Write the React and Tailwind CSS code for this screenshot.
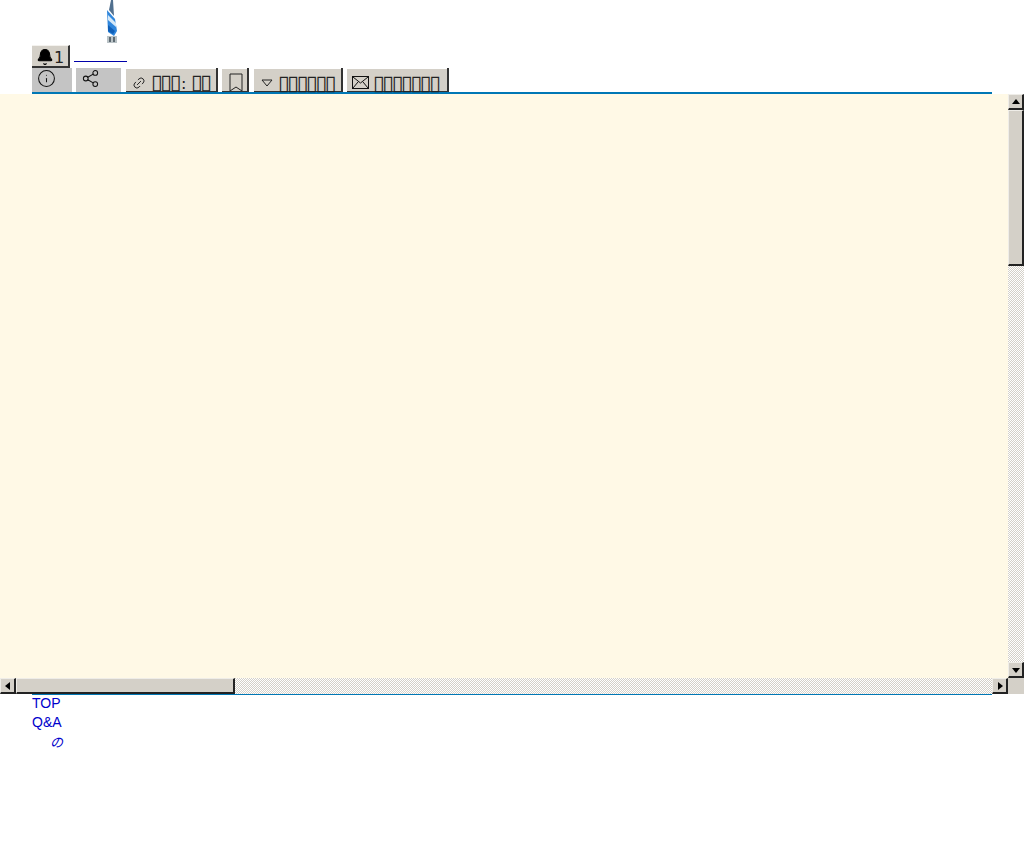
import React from 'react';
import { Bell, Info, Share2, Link2 } from 'lucide-react';

const track = 'bg-[repeating-conic-gradient(#d4d0c8_0_25%,#ffffff_0_50%)] bg-[length:2px_2px]';
const bevel = 'bg-[#d4d0c8] border-t border-l border-t-[#efede8] border-l-[#efede8] border-r-2 border-b-2 border-r-[#222222] border-b-[#222222]';

const Arrow = ({ points }) => (
    <button className={`w-4 h-4 shrink-0 flex items-center justify-center ${bevel}`}>
        <svg width="12" height="12" viewBox="0 0 12 12">
            <polygon points={points} fill="#000" />
        </svg>
    </button>
);

const ToolButton = ({ className, children }) => (
    <button className={`h-[24px] flex items-end justify-start bg-[linear-gradient(#ffffff_0_1px,#d4d0c8_1px)] border-r-2 border-b border-r-[#333333] border-b-[#333333] text-[#222222] ${className}`}>
        {children}
    </button>
);

const Tofu = ({ children }) => (
    <span className="text-[21px] leading-[15px] tracking-[-2.2px]">{children}</span>
);

const Logo = () => (
    <svg width="12" height="44" viewBox="0 0 12 44">
        <polygon points="5,0 7,0 8,16 3,10" fill="#51708f" />
        <polygon points="1,10 9,19 11,31 8,36 2,32" fill="#2f86dc" />
        <polygon points="2,15 10,23 10,27 2,20" fill="#d4e8f8" />
        <polygon points="2,25 9,31 7,34 2,31" fill="#0f5fb8" />
        <rect x="1" y="36" width="10" height="7" fill="#b9c2c6" />
        <rect x="3" y="37" width="2" height="5" fill="#5d6a72" />
        <rect x="7" y="37" width="2" height="5" fill="#5d6a72" />
    </svg>
);

const App = () => {
    return (
        <div className="w-[1024px] h-[842px] bg-white overflow-hidden font-['Liberation_Sans',sans-serif]">
            <div className="h-[45px] pl-[106px]">
                <Logo />
            </div>

            <div className="h-[23px] pl-8 flex">
                <button className="w-[38px] h-[23px] flex items-end justify-center bg-[#d4d0c8] border-t border-t-[#f4f2ee] border-r-2 border-b-2 border-r-[#333333] border-b-[#333333] text-[16px] leading-[16px] text-[#222222] font-['DejaVu_Sans',sans-serif]">
                    <Bell size={18} fill="#000" color="#000" strokeWidth={1.5} />
                    <span>1</span>
                </button>
                <div className="ml-1 w-[53px] h-[17px] border-b border-b-[#0000aa]" />
            </div>

            <div className="mx-8 h-[26px] flex items-start border-b-2 border-b-[#0077b5] font-['DejaVu_Sans',sans-serif]">
                <div className="w-10 h-6 bg-[#c4c4c4] pl-[5px] pt-[1px]">
                    <Info size={19} strokeWidth={1.3} color="#111" />
                </div>
                <div className="ml-1 w-[45px] h-6 bg-[#c4c4c4] pl-[5px] pt-px">
                    <Share2 size={19} strokeWidth={1.3} color="#111" />
                </div>
                <ToolButton className="ml-[5px] w-[92px] pl-[6px]">
                    <Link2 size={14} strokeWidth={1.6} className="mb-[1px] mr-[5px] -rotate-45" />
                    <Tofu>▯▯▯<span className="text-[16px] tracking-[0px] ml-[2px]">:</span> ▯▯</Tofu>
                </ToolButton>
                <ToolButton className="ml-[4px] w-[27px] pl-[7px]">
                    <svg width="14" height="19" viewBox="0 0 14 19" className="-mb-px">
                        <path d="M1 18V1h12v17l-6-4z" fill="none" stroke="#222" strokeWidth="1" />
                    </svg>
                </ToolButton>
                <ToolButton className="ml-[5px] w-[89px] pl-[6px]">
                    <svg width="14" height="14" viewBox="0 0 14 14" className="mb-[1px] mr-[4px]">
                        <polygon points="2,4 12,4 7,10" fill="none" stroke="#222" strokeWidth="1" />
                    </svg>
                    <Tofu>▯▯▯▯▯▯</Tofu>
                </ToolButton>
                <ToolButton className="ml-[4px] w-[102px] pl-[5px]">
                    <svg width="17" height="13" viewBox="0 0 17 13" className="mb-[2px] mr-[4px]">
                        <rect x="0.5" y="0.5" width="16" height="12" fill="none" stroke="#111" strokeWidth="1" />
                        <path d="M1 1l7.5 6L16 1M1 12l5-6M16 12l-5-6" fill="none" stroke="#111" strokeWidth="1" />
                    </svg>
                    <Tofu>▯▯▯▯▯▯▯</Tofu>
                </ToolButton>
            </div>

            <div className="grid grid-cols-[1008px_16px] grid-rows-[584px_16px]">
                <div className="bg-[#fff9e6]" />
                <div className={`flex flex-col ${track}`}>
                    <Arrow points="6,3 10,8 2,8" />
                    <div className={`w-4 h-[156px] ${bevel}`} />
                    <div className="flex-1" />
                    <Arrow points="2,4 10,4 6,9" />
                </div>
                <div className={`flex ${track}`}>
                    <Arrow points="8,2 8,10 3,6" />
                    <div className={`w-[219px] h-4 ${bevel}`} />
                    <div className="flex-1" />
                    <Arrow points="4,2 4,10 9,6" />
                </div>
                <div className="bg-[#d4d0c8]" />
            </div>

            <div className="mx-8 -mt-px border-t-2 border-t-[#0077b5] text-[14px] leading-[19px] text-[#0000cc]">
                <div className="-mt-px"><a>TOP</a></div>
                <div><a>Q&amp;A</a></div>
                <div className="pl-[18px] text-[13px] italic font-['Noto_Sans_CJK_JP',sans-serif]"><a>の</a></div>
            </div>
        </div>
    );
};

export default App;
